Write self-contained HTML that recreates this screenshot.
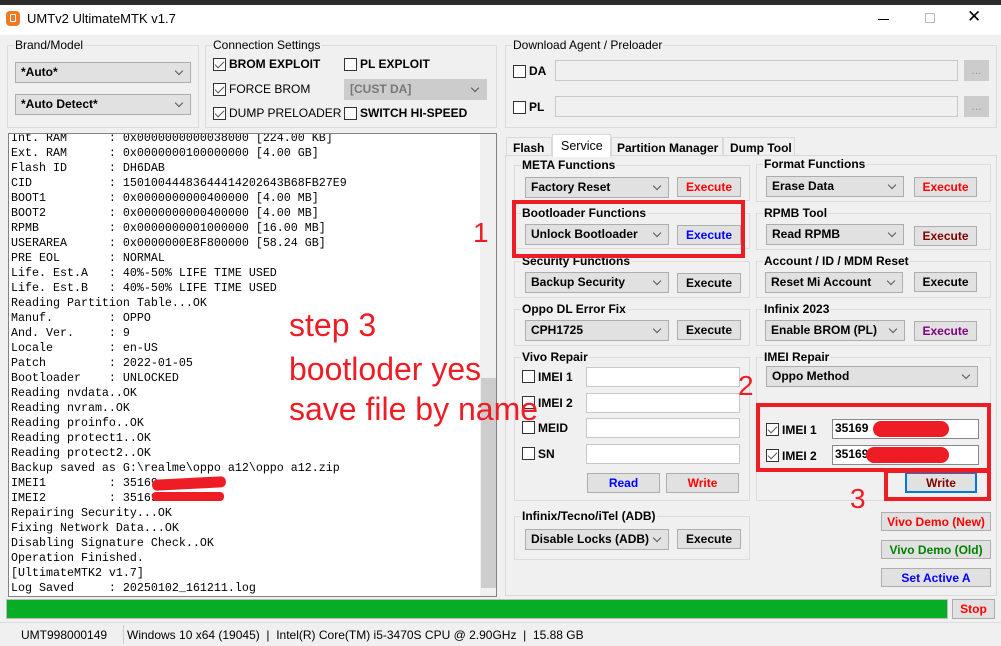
<!DOCTYPE html>
<html><head><meta charset="utf-8"><style>
*{box-sizing:border-box;margin:0;padding:0}
body{width:1001px;height:646px;background:#f0f0f0;position:relative;overflow:hidden;font-family:"Liberation Sans",sans-serif;font-size:12px;color:#000}
.a{position:absolute}
.gb{position:absolute;border:1px solid #dcdcdc}
.gb>span{position:absolute;top:-8px;left:6px;background:#f0f0f0;padding:0 1px;font-size:12px;white-space:nowrap}
.b{font-weight:bold}
.cb{position:absolute;border:1px solid #adadad;background:#e1e1e1;font-weight:bold;font-size:12px;padding:2px 0 0 5px;white-space:nowrap}
.cb:after{content:"";position:absolute;right:8px;top:5px;width:5px;height:5px;border-right:1px solid #555;border-bottom:1px solid #555;transform:rotate(45deg)}
.bt{position:absolute;border:1px solid #adadad;background:#e1e1e1;font-weight:bold;font-size:12px;text-align:center;padding-top:2px;white-space:nowrap}
.ck{position:absolute;width:13px;height:13px;border:1px solid #333;background:#fff}
.ck.on:after{content:"";position:absolute;left:3px;top:0px;width:4px;height:8px;border-right:1.5px solid #555;border-bottom:1.5px solid #555;transform:rotate(45deg)}
.in{position:absolute;border:1px solid #c8c8c8;background:#fff}
.lbl{position:absolute;font-weight:bold;font-size:12px;white-space:nowrap}
.ann{position:absolute;color:#ee1c25;font-size:32px;line-height:38px;white-space:nowrap;font-family:"Liberation Sans",sans-serif}
.rr{position:absolute;border:4px solid #ee1c25}
.tab{position:absolute;border:1px solid #d9d9d9;border-bottom:none;font-weight:bold;font-size:12px;white-space:nowrap}
#log{position:absolute;left:8px;top:133px;width:489px;height:464px;background:#fff;border:1px solid #828282;overflow:hidden}
#log pre{position:absolute;left:2px;top:-3px;font-family:"Liberation Mono",monospace;font-size:11.66px;line-height:15px;color:#000}
</style></head><body>
<div class="a" style="left:0;top:0;width:1001px;height:5px;background:#2b2b2b"></div>
<div class="a" style="left:0;top:5px;width:1001px;height:30px;background:#fff"></div>
<div class="a" style="left:6px;top:11px;width:14px;height:15px;border-radius:4px;background:#f07a22"></div>
<div class="a" style="left:10px;top:14px;width:6px;height:8px;border:1px solid #fff;border-radius:1px"></div>
<div class="a" style="left:27px;top:11px;font-size:13px">UMTv2 UltimateMTK v1.7</div>
<div class="a" style="left:878px;top:19px;width:11px;height:1px;background:#000"></div>
<div class="a" style="left:925px;top:13px;width:10px;height:10px;border:1px solid #bbb"></div>
<div class="a" style="left:967px;top:7px;font-size:17px">✕</div>

<div class="gb" style="left:7px;top:45px;width:192px;height:83px"><span>Brand/Model</span></div>
<div class="cb" style="left:15px;top:62px;width:176px;height:21px">*Auto*</div>
<div class="cb" style="left:15px;top:94px;width:176px;height:21px">*Auto Detect*</div>

<div class="gb" style="left:205px;top:45px;width:292px;height:83px"><span>Connection Settings</span></div>
<div class="ck on" style="left:213px;top:58px"></div><div class="lbl" style="left:229px;top:57px">BROM EXPLOIT</div>
<div class="ck on" style="left:213px;top:83px"></div><div class="a" style="left:229px;top:82px">FORCE BROM</div>
<div class="ck on" style="left:213px;top:107px"></div><div class="a" style="left:229px;top:106px">DUMP PRELOADER</div>
<div class="ck" style="left:344px;top:58px"></div><div class="lbl" style="left:360px;top:57px">PL EXPLOIT</div>
<div class="cb" style="left:344px;top:79px;width:143px;height:21px;background:#ccc;border-color:#ccc;color:#777">[CUST DA]</div>
<div class="ck" style="left:344px;top:107px"></div><div class="lbl" style="left:360px;top:106px">SWITCH HI-SPEED</div>

<div class="gb" style="left:505px;top:45px;width:492px;height:83px"><span>Download Agent / Preloader</span></div>
<div class="ck" style="left:513px;top:65px"></div><div class="lbl" style="left:529px;top:64px">DA</div>
<div class="in" style="left:555px;top:60px;width:403px;height:21px;background:#f0f0f0"></div>
<div class="bt" style="left:964px;top:60px;width:25px;height:21px;background:#ccc;border-color:#ccc;color:#999;font-weight:normal">...</div>
<div class="ck" style="left:513px;top:101px"></div><div class="lbl" style="left:529px;top:100px">PL</div>
<div class="in" style="left:555px;top:96px;width:403px;height:21px;background:#f0f0f0"></div>
<div class="bt" style="left:964px;top:96px;width:25px;height:21px;background:#ccc;border-color:#ccc;color:#999;font-weight:normal">...</div>

<div id="log"><pre>Int. RAM      : 0x0000000000038000 [224.00 KB]
Ext. RAM      : 0x0000000100000000 [4.00 GB]
Flash ID      : DH6DAB
CID           : 15010044483644414202643B68FB27E9
BOOT1         : 0x0000000000400000 [4.00 MB]
BOOT2         : 0x0000000000400000 [4.00 MB]
RPMB          : 0x0000000001000000 [16.00 MB]
USERAREA      : 0x0000000E8F800000 [58.24 GB]
PRE EOL       : NORMAL
Life. Est.A   : 40%-50% LIFE TIME USED
Life. Est.B   : 40%-50% LIFE TIME USED
Reading Partition Table...OK
Manuf.        : OPPO
And. Ver.     : 9
Locale        : en-US
Patch         : 2022-01-05
Bootloader    : UNLOCKED
Reading nvdata..OK
Reading nvram..OK
Reading proinfo..OK
Reading protect1..OK
Reading protect2..OK
Backup saved as G:\realme\oppo a12\oppo a12.zip
IMEI1         : 35169
IMEI2         : 35169
Repairing Security...OK
Fixing Network Data...OK
Disabling Signature Check..OK
Operation Finished.
[UltimateMTK2 v1.7]
Log Saved     : 20250102_161211.log</pre>
<div class="a" style="left:471px;top:0;width:17px;height:462px;background:#f0f0f0"></div>
<div class="a" style="left:472px;top:244px;width:15px;height:210px;background:#cdcdcd"></div>
</div>
<div class="a" style="left:152px;top:478px;width:74px;height:11px;background:#ee1c25;border-radius:5px;transform:rotate(-3deg)"></div>
<div class="a" style="left:152px;top:492px;width:72px;height:9px;background:#ee1c25;border-radius:4px"></div>

<!-- tabs -->
<div class="a" style="left:505px;top:155px;width:492px;height:441px;background:#fff;border:1px solid #d9d9d9"></div>
<div class="a" style="left:506px;top:156px;width:490px;height:439px;background:#f0f0f0"></div>
<div class="tab" style="left:506px;top:137px;width:46px;height:19px;padding:3px 0 0 6px">Flash</div>
<div class="tab" style="left:552px;top:134px;width:59px;height:23px;background:#fff;padding:4px 0 0 8px;font-weight:normal;font-size:12.5px">Service</div>
<div class="tab" style="left:611px;top:137px;width:112px;height:19px;padding:3px 0 0 5px">Partition Manager</div>
<div class="tab" style="left:723px;top:137px;width:72px;height:19px;padding:3px 0 0 6px">Dump Tool</div>

<div class="gb" style="left:514px;top:165px;width:236px;height:36px"><span class="b">META Functions</span></div>
<div class="cb" style="left:525px;top:177px;width:144px;height:21px">Factory Reset</div>
<div class="bt" style="left:677px;top:177px;width:64px;height:20px;color:#f00">Execute</div>
<div class="gb" style="left:514px;top:213px;width:236px;height:36px"><span class="b">Bootloader Functions</span></div>
<div class="cb" style="left:525px;top:224px;width:144px;height:21px">Unlock Bootloader</div>
<div class="bt" style="left:677px;top:225px;width:64px;height:20px;color:#00f">Execute</div>
<div class="gb" style="left:514px;top:261px;width:236px;height:37px"><span class="b">Security Functions</span></div>
<div class="cb" style="left:525px;top:272px;width:144px;height:21px">Backup Security</div>
<div class="bt" style="left:677px;top:273px;width:64px;height:20px">Execute</div>
<div class="gb" style="left:514px;top:309px;width:236px;height:37px"><span class="b">Oppo DL Error Fix</span></div>
<div class="cb" style="left:525px;top:320px;width:144px;height:21px">CPH1725</div>
<div class="bt" style="left:677px;top:320px;width:64px;height:20px">Execute</div>
<div class="gb" style="left:514px;top:357px;width:236px;height:144px"><span class="b">Vivo Repair</span></div>
<div class="ck" style="left:522px;top:370px"></div><div class="lbl" style="left:538px;top:370px">IMEI 1</div><div class="in" style="left:586px;top:367px;width:154px;height:20px"></div>
<div class="ck" style="left:522px;top:396px"></div><div class="lbl" style="left:538px;top:396px">IMEI 2</div><div class="in" style="left:586px;top:393px;width:154px;height:20px"></div>
<div class="ck" style="left:522px;top:421px"></div><div class="lbl" style="left:538px;top:421px">MEID</div><div class="in" style="left:586px;top:418px;width:154px;height:20px"></div>
<div class="ck" style="left:522px;top:447px"></div><div class="lbl" style="left:538px;top:447px">SN</div><div class="in" style="left:586px;top:444px;width:154px;height:20px"></div>
<div class="bt" style="left:587px;top:473px;width:73px;height:20px;color:#00f">Read</div>
<div class="bt" style="left:666px;top:473px;width:73px;height:20px;color:#f00">Write</div>
<div class="gb" style="left:514px;top:516px;width:236px;height:44px"><span class="b">Infinix/Tecno/iTel (ADB)</span></div>
<div class="cb" style="left:525px;top:529px;width:144px;height:21px">Disable Locks (ADB)</div>
<div class="bt" style="left:677px;top:529px;width:64px;height:20px">Execute</div>

<div class="gb" style="left:756px;top:164px;width:235px;height:38px"><span class="b">Format Functions</span></div>
<div class="cb" style="left:766px;top:176px;width:138px;height:21px">Erase Data</div>
<div class="bt" style="left:914px;top:177px;width:63px;height:20px;color:#f00">Execute</div>
<div class="gb" style="left:756px;top:213px;width:235px;height:37px"><span class="b">RPMB Tool</span></div>
<div class="cb" style="left:766px;top:224px;width:138px;height:21px">Read RPMB</div>
<div class="bt" style="left:914px;top:226px;width:63px;height:20px;color:#800000">Execute</div>
<div class="gb" style="left:756px;top:261px;width:235px;height:37px"><span class="b">Account / ID / MDM Reset</span></div>
<div class="cb" style="left:765px;top:272px;width:138px;height:21px">Reset Mi Account</div>
<div class="bt" style="left:914px;top:272px;width:63px;height:20px">Execute</div>
<div class="gb" style="left:756px;top:309px;width:235px;height:37px"><span class="b">Infinix 2023</span></div>
<div class="cb" style="left:765px;top:320px;width:140px;height:21px">Enable BROM (PL)</div>
<div class="bt" style="left:914px;top:321px;width:63px;height:20px;color:#800080">Execute</div>
<div class="gb" style="left:756px;top:357px;width:235px;height:144px"><span class="b">IMEI Repair</span></div>
<div class="cb" style="left:766px;top:366px;width:212px;height:21px">Oppo Method</div>
<div class="ck on" style="left:766px;top:423px"></div><div class="lbl" style="left:782px;top:423px">IMEI 1</div>
<div class="in" style="left:832px;top:419px;width:147px;height:20px;border-color:#888;font-weight:bold;padding:1px 2px">35169</div>
<div class="ck on" style="left:766px;top:449px"></div><div class="lbl" style="left:782px;top:449px">IMEI 2</div>
<div class="in" style="left:832px;top:445px;width:147px;height:20px;border-color:#888;font-weight:bold;padding:1px 2px">35169</div>
<div class="a" style="left:873px;top:421px;width:76px;height:16px;background:#ee1c25;border-radius:8px"></div>
<div class="a" style="left:866px;top:447px;width:83px;height:16px;background:#ee1c25;border-radius:8px"></div>
<div class="bt" style="left:905px;top:472px;width:72px;height:21px;color:#800000;border:2px solid #0078d7">Write</div>
<div class="bt" style="left:881px;top:512px;width:110px;height:19px;color:#f00">Vivo Demo (New)</div>
<div class="bt" style="left:881px;top:540px;width:110px;height:19px;color:#008000">Vivo Demo (Old)</div>
<div class="bt" style="left:881px;top:568px;width:110px;height:19px;color:#00f">Set Active A</div>

<div class="a" style="left:6px;top:599px;width:942px;height:20px;background:#bcbcbc"></div>
<div class="a" style="left:7px;top:600px;width:940px;height:18px;background:#06ad25"></div>
<div class="bt" style="left:952px;top:599px;width:43px;height:20px;color:#f00">Stop</div>

<div class="a" style="left:0;top:622px;width:1001px;height:1px;background:#dcdcdc"></div>
<div class="a" style="left:21px;top:628px;font-size:12px">UMT998000149</div>
<div class="a" style="left:123px;top:625px;width:1px;height:19px;background:#ccc"></div>
<div class="a" style="left:127px;top:628px;font-size:12px;white-space:pre">Windows 10 x64 (19045)  |  Intel(R) Core(TM) i5-3470S CPU @ 2.90GHz  |  15.88 GB</div>

<div class="ann" style="left:289px;top:306px">step 3</div>
<div class="ann" style="left:289px;top:350px">bootloder yes</div>
<div class="ann" style="left:289px;top:390px">save file by name</div>
<div class="ann" style="left:473px;top:214px;font-size:28px">1</div>
<div class="ann" style="left:738px;top:367px;font-size:28px">2</div>
<div class="ann" style="left:850px;top:480px;font-size:28px">3</div>
<div class="rr" style="left:512px;top:200px;width:233px;height:58px"></div>
<div class="rr" style="left:756px;top:403px;width:235px;height:69px"></div>
<div class="rr" style="left:884px;top:469px;width:107px;height:32px"></div>
</body></html>
